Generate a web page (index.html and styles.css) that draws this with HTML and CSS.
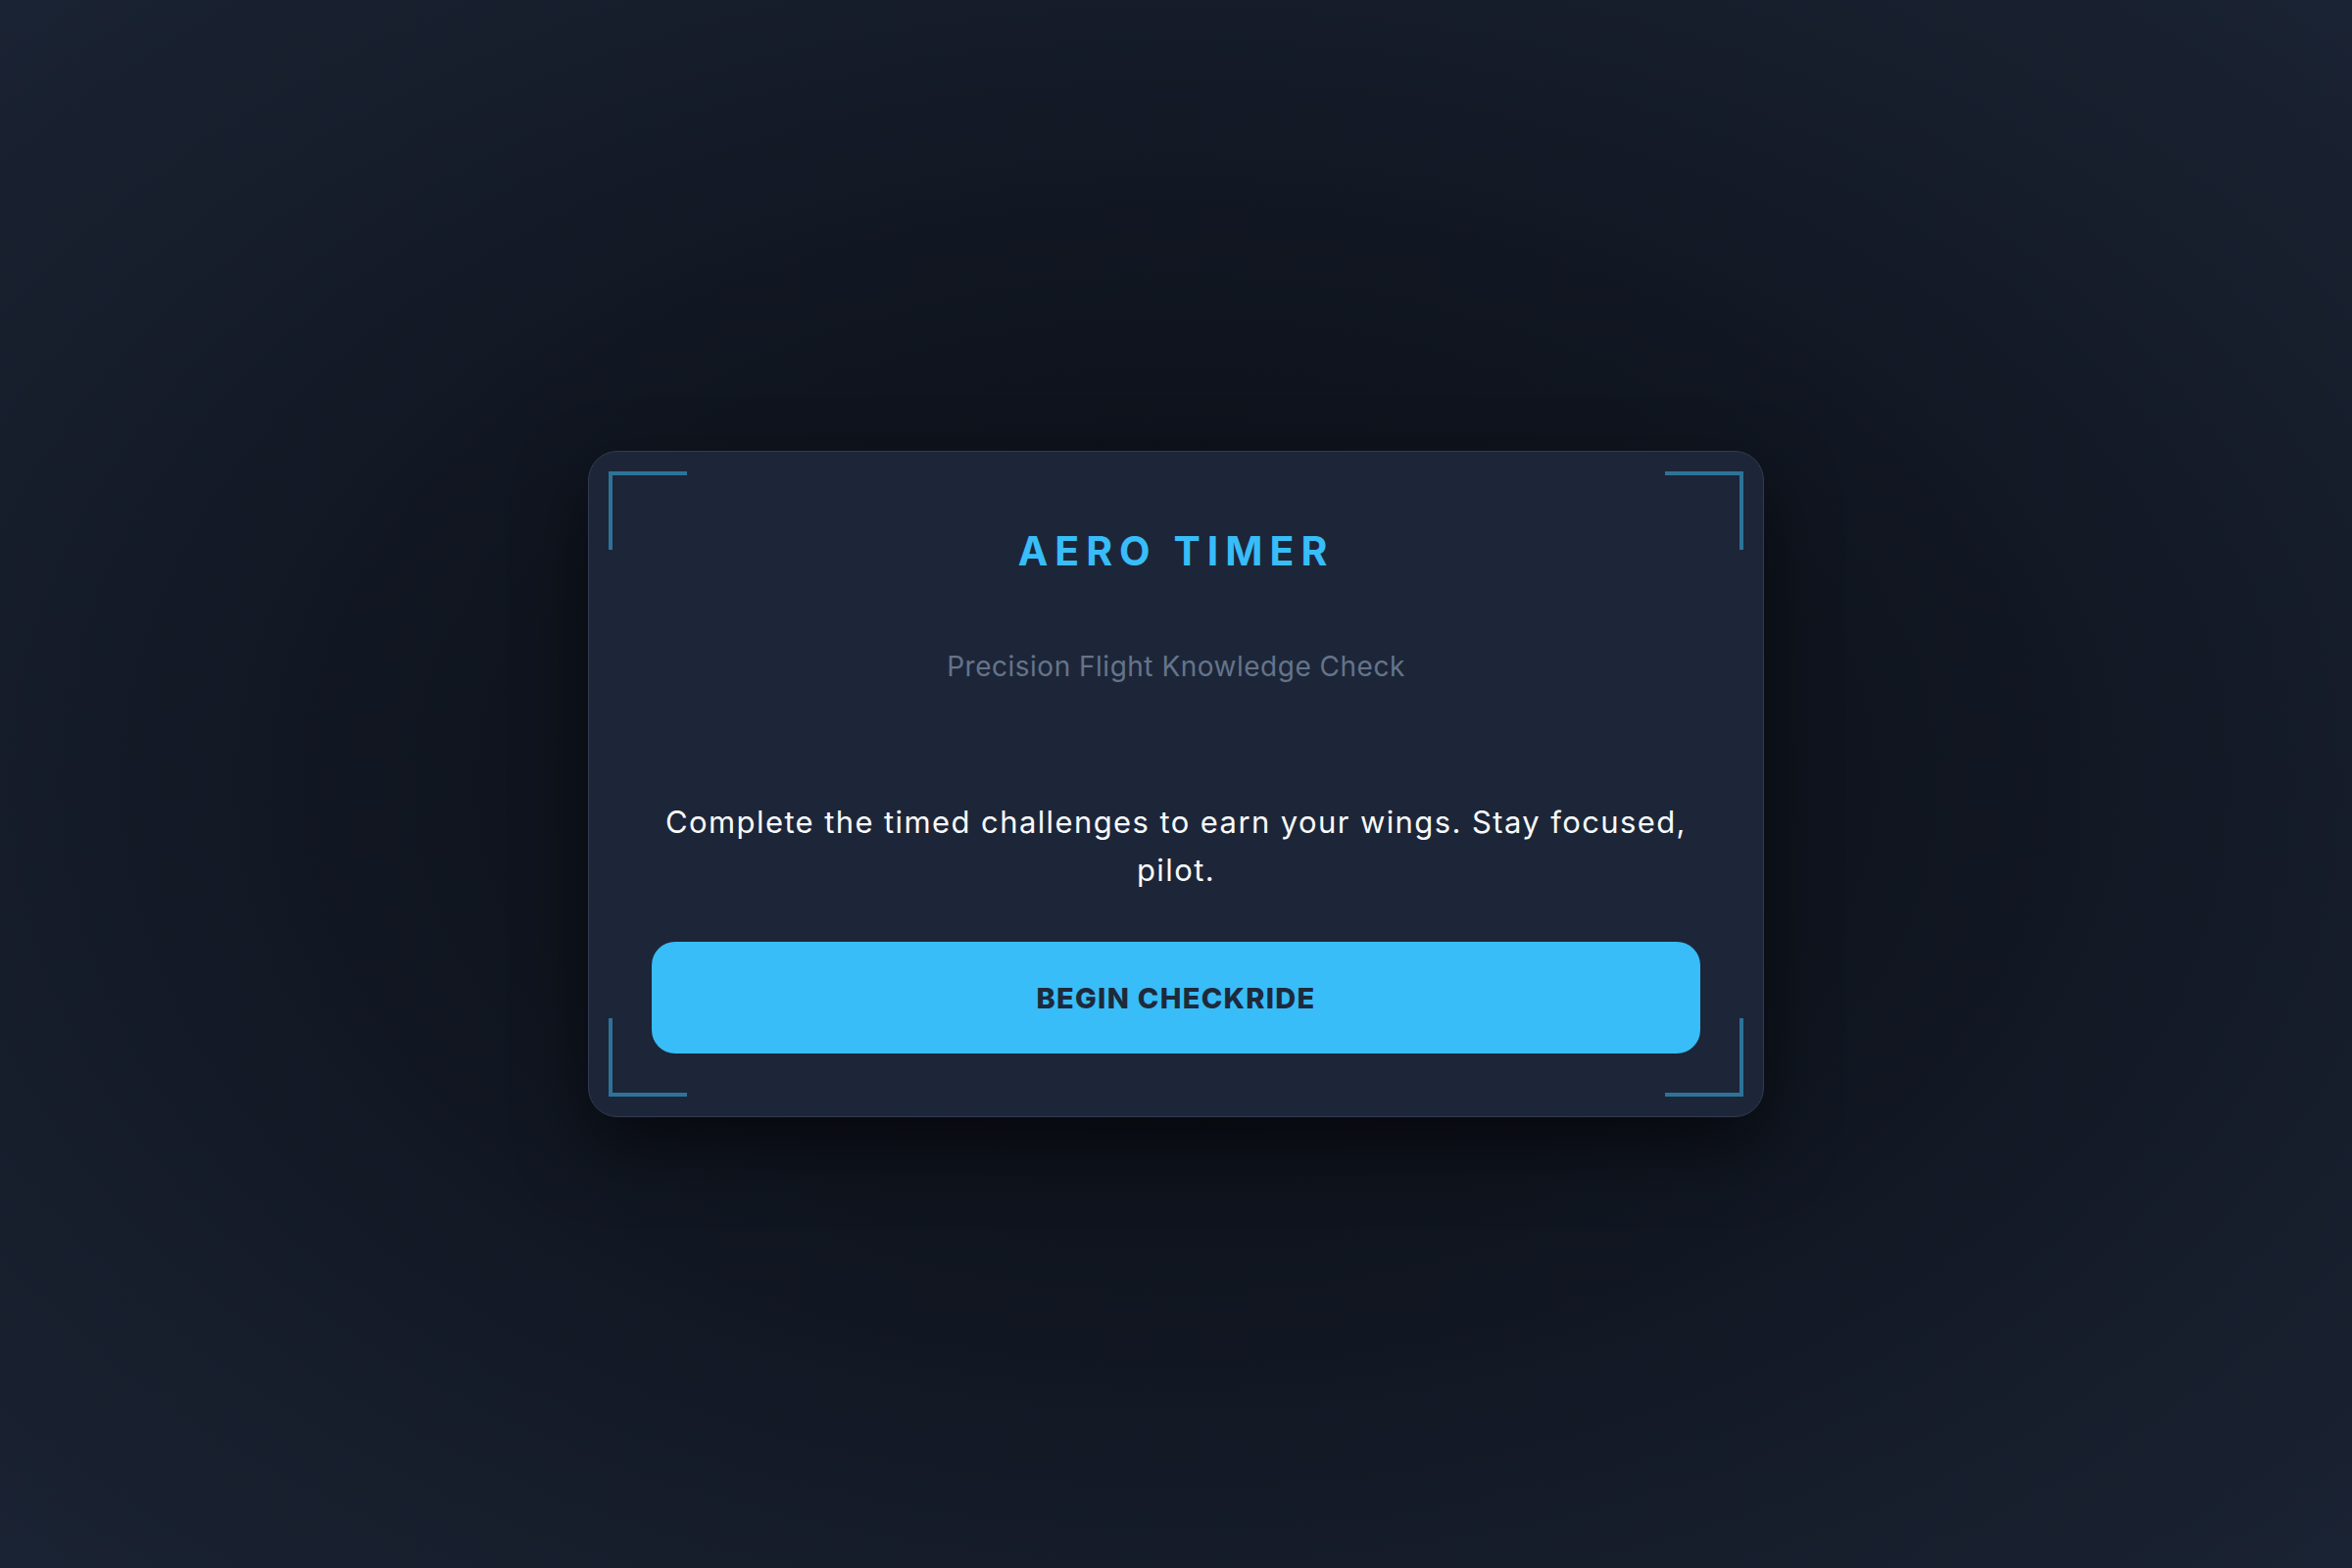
FILE: index.html
```html
<!DOCTYPE html>
<html lang="en">
<head>
<meta charset="utf-8">
<title>Aero Timer</title>
<link rel="stylesheet" href="styles.css">
</head>
<body>
<main class="stage">
  <section class="card">
    <span class="bracket tl"></span>
    <span class="bracket tr"></span>
    <span class="bracket bl"></span>
    <span class="bracket br"></span>
    <h1 class="title">AERO TIMER</h1>
    <p class="subtitle">Precision Flight Knowledge Check</p>
    <p class="intro">Complete the timed challenges to earn your wings. Stay focused, pilot.</p>
    <button class="start">BEGIN CHECKRIDE</button>
  </section>
</main>
</body>
</html>
```

FILE: styles.css
```css
* { box-sizing: border-box; }
html, body { margin: 0; height: 100%; }
body {
  font-family: Inter, "Noto Sans", sans-serif;
  background: radial-gradient(ellipse at 50% 50%, #0b0f18 0%, #0f141e 40%, #161d2b 75%, #1a2333 100%);
  color: #f1f5f9;
}
.stage {
  height: 100%;
  display: flex;
  align-items: center;
  justify-content: center;
}
.card {
  position: relative;
  width: 1200px;
  padding: 64px 64px 64px;
  background: #1d2638;
  border: 1.5px solid #313c4f;
  border-radius: 30px;
  box-shadow: 0 30px 70px rgba(0, 0, 0, 0.55);
  display: flex;
  flex-direction: column;
  align-items: stretch;
  text-align: center;
}
.bracket {
  position: absolute;
  width: 80px;
  height: 80px;
  border-color: #2d7399;
  border-style: solid;
  border-width: 0;
}
.bracket.tl { top: 20px; left: 20px; border-top-width: 4px; border-left-width: 4px; }
.bracket.tr { top: 20px; right: 20px; border-top-width: 4px; border-right-width: 4px; }
.bracket.bl { bottom: 20px; left: 20px; border-bottom-width: 4px; border-left-width: 4px; }
.bracket.br { bottom: 20px; right: 20px; border-bottom-width: 4px; border-right-width: 4px; }
.title {
  margin: 12px 0 0;
  font-size: 41px;
  line-height: 50px;
  font-weight: 700;
  letter-spacing: 7px;
  color: #38bdf8;
}
.subtitle {
  margin: 73px 0 0;
  font-size: 28px;
  line-height: 40px;
  font-weight: 400;
  letter-spacing: 0.5px;
  color: #64748b;
}
.intro {
  margin: 114px 0 0;
  font-size: 31px;
  line-height: 49px;
  font-weight: 400;
  letter-spacing: 1.4px;
  color: #f8fafc;
  padding: 0 8px;
}
.start {
  margin-top: 49px;
  height: 114px;
  border: none;
  border-radius: 24px;
  background: #38bdf8;
  color: #1e293b;
  font-family: Inter, "Noto Sans", sans-serif;
  font-size: 29px;
  font-weight: 800;
  letter-spacing: 1.3px;
}
```
